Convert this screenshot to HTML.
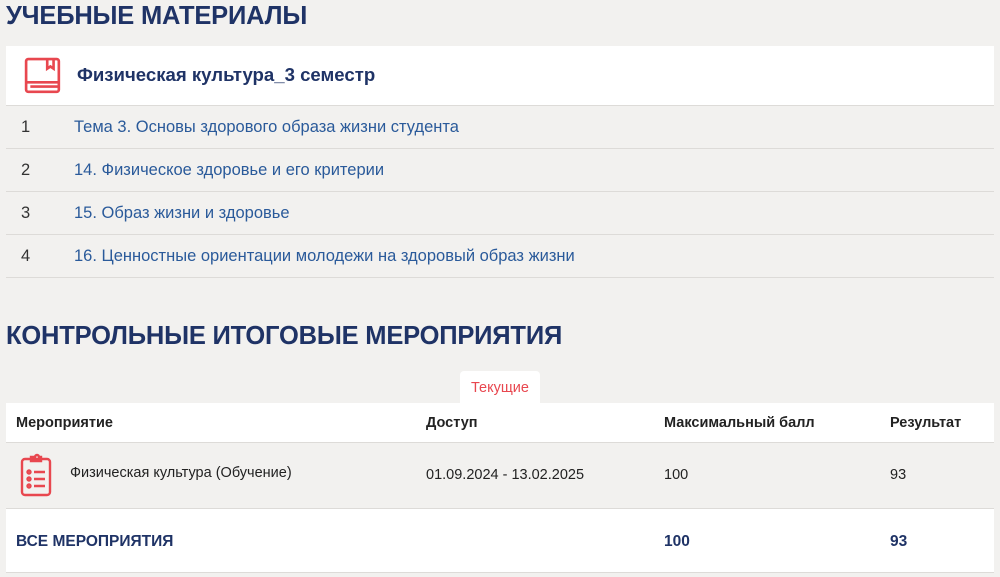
<!DOCTYPE html><html><head><meta charset="utf-8"><style>
body{margin:0;background:#f2f1ef;font-family:"Liberation Sans",sans-serif;width:1000px;height:577px;overflow:hidden;position:relative}
.a{position:absolute}
h1{position:absolute;margin:0;left:6px;font-size:25.5px;font-weight:bold;color:#1f3366;letter-spacing:-0.2px}
.row{position:absolute;left:6px;width:988px;border-bottom:1px solid #dddbd8;font-size:16.5px}
.row span{position:absolute}
</style></head><body>
<h1 style="top:2px">УЧЕБНЫЕ МАТЕРИАЛЫ</h1>
<div class="a" style="left:6px;top:46px;width:988px;height:59px;background:#fff;border-bottom:1px solid #dddbd8"></div>
<svg class="a" style="left:24px;top:57px" width="38" height="38" viewBox="0 0 36 36" fill="none" stroke="#e8474f" stroke-width="2.5"><rect x="2" y="2" width="31" height="31" rx="2"/><path d="M2 24h31M6 28h27M22 2v9l3-2 3 2V2"/></svg>
<div class="a" style="left:77px;top:64px;font-size:18.6px;font-weight:bold;color:#1f3366">Физическая культура_3 семестр</div>
<div class="row" style="top:106px;height:42px"><span style="left:15px;top:12px;color:#333">1</span><span style="left:68px;top:12px;color:#2a5a9a">Тема 3. Основы здорового образа жизни студента</span></div>
<div class="row" style="top:149px;height:42px"><span style="left:15px;top:12px;color:#333">2</span><span style="left:68px;top:12px;color:#2a5a9a">14. Физическое здоровье и его критерии</span></div>
<div class="row" style="top:192px;height:42px"><span style="left:15px;top:12px;color:#333">3</span><span style="left:68px;top:12px;color:#2a5a9a">15. Образ жизни и здоровье</span></div>
<div class="row" style="top:235px;height:42px"><span style="left:15px;top:12px;color:#333">4</span><span style="left:68px;top:12px;color:#2a5a9a">16. Ценностные ориентации молодежи на здоровый образ жизни</span></div>
<h1 style="top:322px">КОНТРОЛЬНЫЕ ИТОГОВЫЕ МЕРОПРИЯТИЯ</h1>
<div class="a" style="left:460px;top:371px;width:80px;height:34px;background:#fff;border-radius:4px 4px 0 0;color:#e8474f;font-size:14.5px;text-align:center;line-height:34px">Текущие</div>
<div class="row" style="top:403px;height:39px;background:#fff;font-size:14.5px;font-weight:bold;color:#222"><span style="left:10px;top:12px">Мероприятие</span><span style="left:420px;top:12px">Доступ</span><span style="left:658px;top:12px">Максимальный балл</span><span style="left:884px;top:12px">Результат</span></div>
<div class="row" style="top:443px;height:65px;font-size:14.5px;color:#222"><span style="left:64px;top:22px">Физическая культура (Обучение)</span><span style="left:420px;top:24px">01.09.2024 - 13.02.2025</span><span style="left:658px;top:24px">100</span><span style="left:884px;top:24px">93</span></div>
<svg class="a" style="left:18px;top:453px" width="38" height="46" viewBox="0 0 36 46" fill="none" stroke="#e8474f" stroke-width="2.4"><rect x="3" y="6" width="28" height="36" rx="3"/><path d="M12 8V4h4a2 2 0 0 1 4 0h2v4z"/><circle cx="10" cy="19" r="1.5"/><circle cx="10" cy="26" r="1.5"/><circle cx="10" cy="33" r="1.5"/><path d="M15 19h11M15 26h11M15 33h11"/></svg>
<div class="row" style="top:509px;height:63px;background:#fff;font-weight:bold;color:#1f3366;font-size:15.5px"><span style="left:10px;top:24px">ВСЕ МЕРОПРИЯТИЯ</span><span style="left:658px;top:24px">100</span><span style="left:884px;top:24px">93</span></div>
</body></html>
